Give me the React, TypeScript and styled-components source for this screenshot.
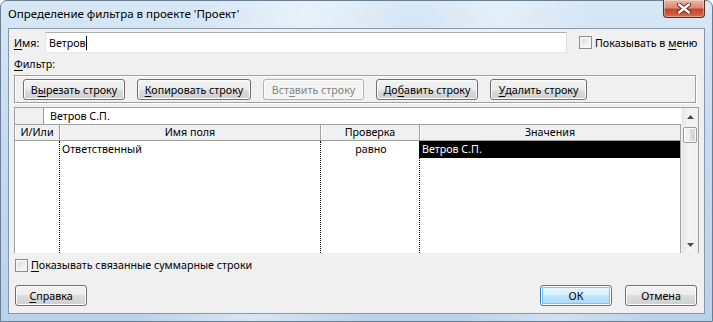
import styled, { createGlobalStyle } from 'styled-components'

const uiFont = `"Noto Sans", "Liberation Sans", sans-serif`

const GlobalStyle = createGlobalStyle`
  html, body {
    margin: 0;
    padding: 0;
    background: #fff;
  }
  body {
    font-family: ${uiFont};
    font-size: 10.7px;
    color: #000;
  }
  #root {
    width: 713px;
    height: 322px;
    overflow: hidden;
  }
  u {
    text-decoration-thickness: 1px;
    text-underline-offset: 2px;
  }
`

type Column = { title: string; width: number; align: 'left' | 'center' }

const columns: Column[] = [
  { title: 'И/Или', width: 45, align: 'left' },
  { title: 'Имя поля', width: 261, align: 'left' },
  { title: 'Проверка', width: 99, align: 'center' },
  { title: 'Значения', width: 261, align: 'left' },
]

const row = ['', 'Ответственный', 'равно', 'Ветров С.П.']

const App = () => {
  return (
    <>
      <GlobalStyle />
      <Frame>
        <TitleBar>
          <Title>Определение фильтра в проекте 'Проект'</Title>
          <CloseButton>
            <svg width="18" height="11" viewBox="0 0 18 11">
              <path d="M4 1.5 L14 9.5 M14 1.5 L4 9.5" stroke="#5a2018" strokeWidth="4.2" strokeLinecap="round" />
              <path d="M4 1.5 L14 9.5 M14 1.5 L4 9.5" stroke="#fff" strokeWidth="2.4" strokeLinecap="round" />
            </svg>
          </CloseButton>
        </TitleBar>

        <Client>
          <NameRow>
            <NameLabel><u>И</u>мя:</NameLabel>
            <NameInput>Ветров<Caret /></NameInput>
            <CheckOption $gap={3} $indent={12}>
              <CheckBox />
              <span>Показывать в <u>м</u>еню</span>
            </CheckOption>
          </NameRow>

          <FilterLabel><u>Ф</u>ильтр:</FilterLabel>

          <GroupBox>
            <Button $width={102}>В<u>ы</u>резать строку</Button>
            <Button $width={114}><u>К</u>опировать строку</Button>
            <Button $width={101} $disabled>Вст<u>а</u>вить строку</Button>
            <Button $width={102}>До<u>б</u>авить строку</Button>
            <Button $width={97}><u>У</u>далить строку</Button>
          </GroupBox>

          <Grid>
            <GridMain>
              <EditRow>
                <RowSelector />
                <EditText>Ветров С.П.</EditText>
              </EditRow>
              <HeaderRow>
                {columns.map((c) => (
                  <HeaderCell key={c.title} $width={c.width}>{c.title}</HeaderCell>
                ))}
              </HeaderRow>
              <Body>
                {columns.map((c, i) => (
                  <BodyColumn key={c.title} $width={c.width} $last={i === columns.length - 1}>
                    <Cell $align={c.align} $selected={i === columns.length - 1}>{row[i]}</Cell>
                  </BodyColumn>
                ))}
              </Body>
            </GridMain>
            <ScrollBar>
              <ScrollArrow>
                <svg width="7" height="4" viewBox="0 0 7 4"><path d="M0 4 L3.5 0 L7 4 Z" fill="#4d4d4d" /></svg>
              </ScrollArrow>
              <Thumb />
              <ScrollTrack />
              <ScrollArrow>
                <svg width="7" height="4" viewBox="0 0 7 4"><path d="M0 0 L3.5 4 L7 0 Z" fill="#4d4d4d" /></svg>
              </ScrollArrow>
            </ScrollBar>
          </Grid>

          <SummaryRow>
            <CheckOption $gap={3} $indent={1}>
              <CheckBox />
              <span><u>П</u>оказывать связанные суммарные строки</span>
            </CheckOption>
          </SummaryRow>

          <Footer>
            <Button $width={72}><u>С</u>правка</Button>
            <FooterRight>
              <Button $width={72} $default>ОК</Button>
              <Button $width={72}>Отмена</Button>
            </FooterRight>
          </Footer>
        </Client>
      </Frame>
    </>
  )
}

const Frame = styled.div`
  box-sizing: border-box;
  width: 713px;
  height: 322px;
  display: flex;
  flex-direction: column;
  padding: 0 7px 7px;
  border: 1px solid #6a7f94;
  border-radius: 7px 7px 0 0;
  background:
    linear-gradient(100deg, rgba(255,255,255,0) 25%, rgba(255,255,255,0.45) 40%, rgba(255,255,255,0) 55%),
    linear-gradient(80deg, rgba(255,255,255,0) 60%, rgba(255,255,255,0.35) 72%, rgba(255,255,255,0) 85%),
    linear-gradient(to bottom, #d7e7f6 0%, #c6dcf1 40%, #b9d2eb 100%);
`
const TitleBar = styled.div`
  height: 27px;
  flex-shrink: 0;
  display: flex;
  align-items: flex-start;
  justify-content: space-between;
`
const Title = styled.span`
  margin-top: 5px;
  font-size: 11.5px;
  line-height: 16px;
  white-space: nowrap;
`
const CloseButton = styled.div`
  box-sizing: border-box;
  width: 42px;
  height: 18px;
  margin-top: -1px;
  display: flex;
  align-items: center;
  justify-content: center;
  border: 1px solid #5b2c24;
  border-top: none;
  border-radius: 0 0 4px 4px;
  background: linear-gradient(to bottom, #e9b8a8 0%, #dc8a73 45%, #c7472d 55%, #d56a4c 100%);
  box-shadow: inset 0 0 0 1px rgba(255,255,255,0.35);
`
const Client = styled.div`
  flex: 1;
  display: flex;
  flex-direction: column;
  background: #f0f0f0;
  border: 1px solid #8797a8;
  padding: 3px 7px 0 5px;
  min-height: 0;
`
const NameRow = styled.div`
  height: 21px;
  display: flex;
  align-items: center;
  flex-shrink: 0;
`
const NameLabel = styled.span`
  width: 31px;
  flex-shrink: 0;
  line-height: 16px;
`
const NameInput = styled.div`
  box-sizing: border-box;
  width: 522px;
  height: 21px;
  flex-shrink: 0;
  padding: 0 3px;
  display: flex;
  align-items: center;
  background: #fff;
  border: 1px solid #abadb3;
  border-left-color: #e2e3ea;
  border-right-color: #dbdfe6;
  border-bottom-color: #e3e9ef;
  line-height: 16px;
`
const Caret = styled.span`
  width: 1px;
  height: 14px;
  background: #000;
`
const CheckOption = styled.label<{ $gap: number; $indent: number }>`
  display: flex;
  align-items: center;
  gap: ${(p) => p.$gap}px;
  margin-left: ${(p) => p.$indent}px;
  line-height: 16px;
  white-space: nowrap;
`
const CheckBox = styled.span`
  box-sizing: border-box;
  width: 13px;
  height: 13px;
  flex-shrink: 0;
  border: 1px solid #8e8f8f;
  background: linear-gradient(135deg, #cfcfcf 0%, #efefef 60%, #ffffff 100%);
  box-shadow: inset 0 0 0 2px #f4f4f4;
`
const FilterLabel = styled.div`
  margin-top: 3px;
  line-height: 16px;
  flex-shrink: 0;
`
const GroupBox = styled.div`
  box-sizing: border-box;
  width: 682px;
  height: 28px;
  margin-top: 3px;
  padding: 3px 8px 0;
  display: flex;
  gap: 12px;
  flex-shrink: 0;
  border: 1px solid #a0a0a0;
  box-shadow: inset 1px 1px 0 #fff, 1px 1px 0 #fff;
`
const Button = styled.div<{ $width: number; $disabled?: boolean; $default?: boolean }>`
  box-sizing: border-box;
  width: ${(p) => p.$width}px;
  height: 21px;
  flex-shrink: 0;
  display: flex;
  align-items: center;
  justify-content: center;
  border-radius: 3px;
  line-height: 16px;
  white-space: nowrap;
  color: ${(p) => (p.$disabled ? '#838383' : '#000')};
  border: 1px solid ${(p) => (p.$disabled ? '#adb2b5' : p.$default ? '#3c7fb1' : '#707070')};
  background: ${(p) =>
    p.$disabled
      ? '#f4f4f4'
      : p.$default
        ? 'linear-gradient(to bottom, #eaf6fd 0%, #d9f0fc 50%, #bee6fd 50%, #a7d9f5 100%)'
        : 'linear-gradient(to bottom, #f2f2f2 0%, #ebebeb 50%, #dddddd 50%, #cfcfcf 100%)'};
  box-shadow: ${(p) =>
    p.$default ? 'inset 0 0 0 1px #ffffff, inset 0 0 0 2px #79c7ef' : 'inset 0 0 0 1px #fcfcfc'};
`
const Grid = styled.div`
  box-sizing: border-box;
  width: 685px;
  height: 146px;
  margin-top: 4px;
  flex-shrink: 0;
  display: flex;
  border: 1px solid #a0a0a0;
  border-bottom: none;
  background: #fff;
`
const GridMain = styled.div`
  width: 666px;
  display: flex;
  flex-direction: column;
`
const EditRow = styled.div`
  height: 16px;
  display: flex;
  flex-shrink: 0;
`
const RowSelector = styled.div`
  width: 28px;
  background: #f0f0f0;
  border-right: 1px solid #a0a0a0;
`
const EditText = styled.div`
  padding-left: 6px;
  line-height: 16px;
`
const HeaderRow = styled.div`
  height: 17px;
  display: flex;
  flex-shrink: 0;
  box-sizing: border-box;
  border-top: 1px solid #a0a0a0;
  border-bottom: 1px solid #a0a0a0;
`
const HeaderCell = styled.div<{ $width: number }>`
  box-sizing: border-box;
  width: ${(p) => p.$width}px;
  border-right: 1px solid #a0a0a0;
  background: #f0f0f0;
  box-shadow: inset 1px 0 0 #fff;
  text-align: center;
  line-height: 15px;
`
const Body = styled.div`
  flex: 1;
  display: flex;
`
const BodyColumn = styled.div<{ $width: number; $last: boolean }>`
  box-sizing: border-box;
  width: ${(p) => p.$width}px;
  border-right: 1px ${(p) => (p.$last ? 'solid #a0a0a0' : 'dotted #000')};
`
const Cell = styled.div<{ $align: 'left' | 'center'; $selected: boolean }>`
  height: 17px;
  padding-left: ${(p) => (p.$selected ? 3 : 2)}px;
  margin-left: ${(p) => (p.$selected ? -1 : 0)}px;
  line-height: 17px;
  text-align: ${(p) => p.$align};
  background: ${(p) => (p.$selected ? '#000' : 'transparent')};
  color: ${(p) => (p.$selected ? '#fff' : '#000')};
  white-space: nowrap;
`
const ScrollBar = styled.div`
  width: 17px;
  display: flex;
  flex-direction: column;
  background: linear-gradient(to right, #e6e6e6 0%, #f4f4f4 40%, #f0f0f0 100%);
  border-left: 1px solid #f5f5f5;
`
const ScrollArrow = styled.div`
  height: 17px;
  display: flex;
  align-items: center;
  justify-content: center;
  flex-shrink: 0;
`
const Thumb = styled.div`
  box-sizing: border-box;
  height: 16px;
  margin: 2px 1px 0;
  border: 1px solid #9b9b9b;
  border-radius: 2px;
  background: linear-gradient(to right, #f6f6f6 0%, #ececec 50%, #dcdcdc 51%, #d2d2d2 100%);
  box-shadow: inset 0 0 0 1px #fafafa;
`
const ScrollTrack = styled.div`
  flex: 1;
`
const SummaryRow = styled.div`
  margin-top: 4px;
  flex-shrink: 0;
`
const Footer = styled.div`
  margin-top: 12px;
  display: flex;
  justify-content: space-between;
  padding-left: 1px;
  flex-shrink: 0;
`
const FooterRight = styled.div`
  display: flex;
  gap: 13px;
`

export default App
